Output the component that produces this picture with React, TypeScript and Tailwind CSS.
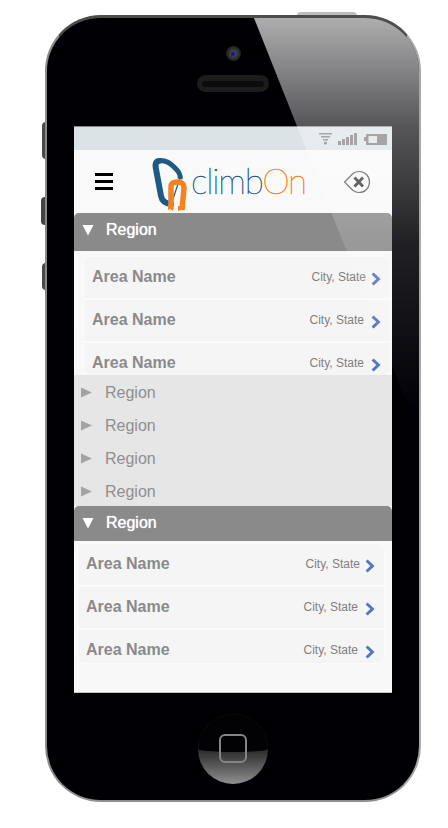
const sans = 'font-["Liberation_Sans",Arial,sans-serif]';

function Triangle({ open }: { open: boolean }) {
  if (open) {
    return (
      <svg width="12" height="12" viewBox="0 0 12 12" className="shrink-0">
        <path d="M0.5 1H11.5L6 11.5Z" fill="#fff" />
      </svg>
    );
  }
  return (
    <svg width="11" height="11" viewBox="0 0 11 11" className="shrink-0">
      <path d="M0 0.5L11 5.5L0 10.5Z" fill="#a3a3a3" />
    </svg>
  );
}

function Chevron() {
  return (
    <svg width="10" height="14" viewBox="0 0 10 14" className="shrink-0">
      <path d="M1.6 1.5L7.4 7L1.6 12.5" fill="none" stroke="#5577bb" strokeWidth="3" />
    </svg>
  );
}

function RegionHeader({ size }: { size: string }) {
  return (
    <div className={`flex items-center rounded-t-[5px] bg-[#8a8a8a] pl-2 ${size}`}>
      <Triangle open />
      <span className="ml-3 text-base text-white [text-shadow:0_0_1px_#fff]">Region</span>
    </div>
  );
}

function AreaRow({ gap, height, last }: { gap: string; height: string; last?: boolean }) {
  return (
    <div className={`overflow-hidden bg-[#f5f5f5] ${height} ${last ? '' : 'border-b-2 border-[#fbfbfb]'}`}>
      <div className="flex h-[39px] items-center pr-[9px] pl-2">
        <span className="flex-1 text-base font-bold text-[#8a8a8a]">Area Name</span>
        <span className="text-xs text-[#808080]">City, State</span>
        <span className={`mt-1 ${gap}`}>
          <Chevron />
        </span>
      </div>
    </div>
  );
}

function AreaCard() {
  return (
    <div className="overflow-hidden rounded-lg border border-[#fbfbfb]">
      <AreaRow gap="ml-[5px]" height="h-[43px]" />
      <AreaRow gap="ml-[7px]" height="h-[43px]" />
      <AreaRow gap="ml-[7px]" height="h-[33px]" last />
    </div>
  );
}

function StatusIcons() {
  return (
    <svg width="68" height="14" viewBox="0 0 68 14">
      <g fill="#7c7c7c">
        <rect x="0" y="1" width="13" height="1.5" />
        <rect x="2" y="4" width="9" height="1.5" />
        <rect x="4" y="7" width="5" height="1.5" />
        <circle cx="6.5" cy="11" r="1.6" />
        <rect x="19" y="9" width="3" height="4" />
        <rect x="23" y="7" width="3" height="6" />
        <rect x="27" y="5" width="3" height="8" />
        <rect x="31" y="3" width="3" height="10" />
        <rect x="35" y="1" width="3" height="12" />
        <rect x="45" y="5" width="2" height="4" />
        <path d="M47 2H68V13H47ZM49.5 4V11H58V4Z" fillRule="evenodd" />
      </g>
    </svg>
  );
}

function Logo() {
  return (
    <div className="flex h-14 w-[150px] items-start">
      <svg width="36" height="56" viewBox="0 0 36 56" className="shrink-0">
        <path
          d="M7 5C4 5 3 8 3.8 12L9 40C10 45 13 47.5 19 48"
          fill="none"
          stroke="#1f5a85"
          strokeWidth="6"
          strokeLinecap="round"
        />
        <path d="M7 4.5C14 4 18 7 24 13C27 16 29 19 28 23" fill="none" stroke="#1f5a85" strokeWidth="5" />
        <path d="M28 22L20 46" fill="none" stroke="#1f5a85" strokeWidth="1.2" />
        <path d="M19 53V31C19 27 21 26 25 26C30 26 32 28 32 32L30 54" fill="none" stroke="#f58220" strokeWidth="5.5" />
        <path d="M16 49H21V55L18 53L16 54Z M26 50H32V53L26 55Z" fill="#f58220" />
      </svg>
      <span className={'mt-[4px] ml-[3px] font-["Lato",sans-serif] text-[35px] leading-[40px] font-thin tracking-[-1.2px] whitespace-nowrap [-webkit-text-stroke:0.5px]'}>
        <span className="text-[#1f5a85]">climb</span>
        <span className="text-[#f58220]">On</span>
      </span>
    </div>
  );
}

function DeleteIcon() {
  return (
    <svg width="28" height="24" viewBox="0 0 28 24">
      <path
        d="M1.5 12L10 3.5C12 2 14 1.5 16 1.5C22 1.5 26.5 6 26.5 12C26.5 18 22 22.5 16 22.5C14 22.5 12 22 10 20.5Z"
        fill="none"
        stroke="#555"
        strokeWidth="1.2"
      />
      <path d="M11.5 7.5L20 16.5M20 7.5L11.5 16.5" stroke="#333" strokeWidth="2.8" />
    </svg>
  );
}

function Gloss() {
  return (
    <svg className="pointer-events-none absolute inset-0" width="372" height="783" viewBox="0 0 372 783">
      <defs>
        <linearGradient id="gloss" gradientUnits="userSpaceOnUse" x1="0" y1="0" x2="0" y2="400">
          <stop offset="0" stopColor="#fff" stopOpacity="0.68" />
          <stop offset="0.27" stopColor="#fff" stopOpacity="0.34" />
          <stop offset="0.56" stopColor="#fff" stopOpacity="0.13" />
          <stop offset="1" stopColor="#fff" stopOpacity="0" />
        </linearGradient>
      </defs>
      <path d="M207 0H372V400H366Z" fill="url(#gloss)" />
    </svg>
  );
}

export default function App() {
  return (
    <div className={`relative h-[828px] w-[448px] overflow-hidden bg-white ${sans}`}>
      {/* hardware buttons sticking out of the body */}
      <div className="absolute top-3 left-[297px] h-[4px] w-[60px] rounded-t-sm bg-[#bdbdbd]" />
      <div className="absolute top-[122px] left-[42px] h-[37px] w-[4px] rounded-l-sm bg-[#4a4a4a]" />
      <div className="absolute top-[197px] left-[41px] h-[28px] w-[5px] rounded-l-sm bg-[#444444]" />
      <div className="absolute top-[263px] left-[42px] h-[27px] w-[4px] rounded-l-sm bg-[#4a4a4a]" />

      <div className="relative mt-[15px] ml-[45px] box-border flex h-[787px] w-[376px] flex-col items-center overflow-hidden rounded-[56px] border-2 border-t-[3px] border-t-[#4d4d4d] border-r-[#a8a8a8] border-b-[#8f8f8f] border-l-[#8a8a8a] bg-[#000004]">
        <div className="mt-[28px] flex h-[15px] w-[15px] items-center justify-center rounded-full bg-[radial-gradient(circle,#555_0%,#2a2a2a_55%,#0a0a0a_100%)]">
          <div className="h-[4px] w-[4px] rounded-full bg-[#1010c0]" />
        </div>
        <div className="mt-[14px] flex h-[17px] w-[72px] items-center justify-center rounded-full bg-[#1c1c1c]">
          <div className="h-[6px] w-[62px] rounded-full bg-[#0c0c0c]" />
        </div>

        <div className="mt-[34px] flex h-[567px] w-[318px] flex-col overflow-hidden border-t border-b border-t-[#888888] border-b-[#c4c4c4] bg-[#f8f8f8]">
          <div className="flex h-[23px] items-center justify-end bg-[#dce3e6] pr-[5px]">
            <StatusIcons />
          </div>

          <div className="flex h-[63px] items-center bg-[#f9f9f9]">
            <div className="ml-[21px] flex w-[18px] flex-col gap-1">
              <div className="h-[3px] bg-black" />
              <div className="h-[3px] bg-black" />
              <div className="h-[3px] bg-black" />
            </div>
            <div className="mt-[5px] ml-[39px]">
              <Logo />
            </div>
            <div className="ml-[41px]">
              <DeleteIcon />
            </div>
          </div>

          <RegionHeader size="h-[38px] pb-[5px]" />
          <div className="relative h-[124px] overflow-hidden pt-[5px] pr-px pl-[9px]">
            <div className="absolute top-px left-[3px] h-[84px] w-[308px] rounded-lg border border-[#fbfbfb]" />
            <div className="relative">
              <AreaCard />
            </div>
          </div>

          <div className="flex h-[131px] flex-col bg-[#e6e6e6] pt-px pl-[7px]">
            {[0, 1, 2, 3].map(i => (
              <div key={i} className="flex h-[33px] shrink-0 items-center">
                <Triangle open={false} />
                <span className="ml-[13px] text-base text-[#8f8f8f]">Region</span>
              </div>
            ))}
          </div>

          <RegionHeader size="h-[35px] pb-px" />
          <div className="flex-1 pt-[2px] pr-[7px] pl-[3px]">
            <AreaCard />
          </div>
        </div>

        <div className="relative mt-[21px] h-[70px] w-[70px] overflow-hidden rounded-full bg-gradient-to-b from-[#2a2a2a] from-50% to-[#909090]">
          <div className="h-[38px] rounded-b-[50%_3px] bg-[#020204]" />
          <div className="absolute top-[20px] left-[21px] h-[29px] w-[28px] rounded-[6px] border-2 border-[#858585]" />
        </div>

        <Gloss />
      </div>
    </div>
  );
}
